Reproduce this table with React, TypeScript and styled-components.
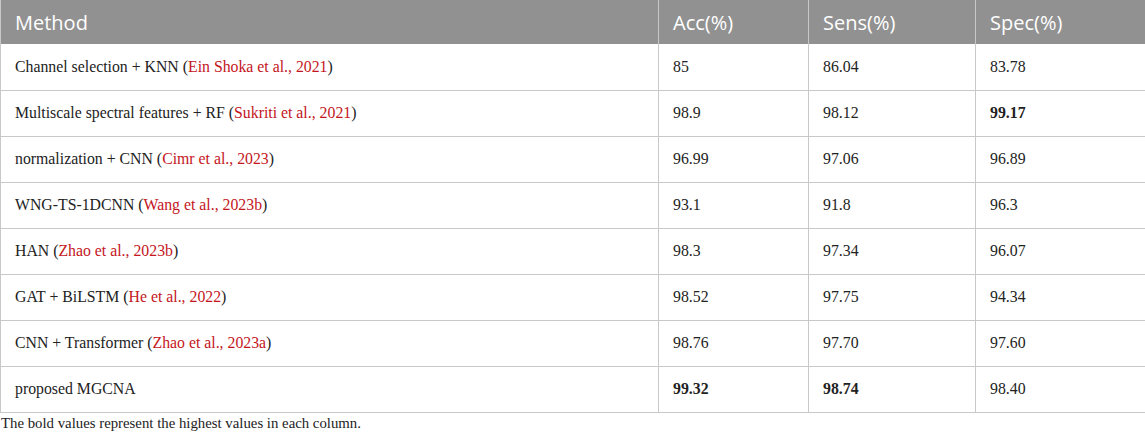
import React from "react";
import styled, { createGlobalStyle } from "styled-components";

const Global = createGlobalStyle`
  html, body { margin: 0; padding: 0; background: #ffffff; }
`;

const Wrap = styled.div`
  width: 1145px;
`;

const Table = styled.table`
  width: 1145px;
  border-collapse: collapse;
  table-layout: fixed;
  border-left: 1px solid #c8c8c8;
  border-right: 2px solid #c8c8c8;
`;

const HeadCell = styled.th`
  background: #919191;
  color: #ffffff;
  font-family: "Open Sans", "Noto Sans", sans-serif;
  font-weight: 400;
  font-size: 20px;
  text-align: left;
  height: 44px;
  padding: 0 0 0 14px;
  border-left: 1px solid #c8c8c8;
  box-sizing: border-box;
`;

const Cell = styled.td<{ $bold?: boolean }>`
  font-family: "Liberation Serif", "Times New Roman", serif;
  font-size: 15.8px;
  color: #222;
  font-weight: ${(p) => (p.$bold ? 700 : 400)};
  height: 46px;
  padding: 0 0 0 14px;
  border-left: 1px solid #c8c8c8;
  border-bottom: 1px solid #c8c8c8;
  box-sizing: border-box;
`;

const Cite = styled.span`
  color: #c4161c;
`;

const Note = styled.div`
  font-family: "Liberation Serif", "Times New Roman", serif;
  font-size: 14.8px;
  color: #222;
  padding: 2px 0 0 1px;
`;

type Row = {
  m: string;
  c: string;
  v: [string, string, string];
  b?: [boolean, boolean, boolean];
};

const rows: Row[] = [
  { m: "Channel selection + KNN", c: "Ein Shoka et al., 2021", v: ["85", "86.04", "83.78"] },
  { m: "Multiscale spectral features + RF", c: "Sukriti et al., 2021", v: ["98.9", "98.12", "99.17"], b: [false, false, true] },
  { m: "normalization + CNN", c: "Cimr et al., 2023", v: ["96.99", "97.06", "96.89"] },
  { m: "WNG-TS-1DCNN", c: "Wang et al., 2023b", v: ["93.1", "91.8", "96.3"] },
  { m: "HAN", c: "Zhao et al., 2023b", v: ["98.3", "97.34", "96.07"] },
  { m: "GAT + BiLSTM", c: "He et al., 2022", v: ["98.52", "97.75", "94.34"] },
  { m: "CNN + Transformer", c: "Zhao et al., 2023a", v: ["98.76", "97.70", "97.60"] },
  { m: "proposed MGCNA", c: "", v: ["99.32", "98.74", "98.40"], b: [true, true, false] },
];

export default function App() {
  return (
    <Wrap>
      <Global />
      <Table>
        <colgroup>
          <col style={{ width: 658 }} />
          <col style={{ width: 150 }} />
          <col style={{ width: 167 }} />
          <col style={{ width: 170 }} />
        </colgroup>
        <thead>
          <tr>
            <HeadCell>Method</HeadCell>
            <HeadCell>Acc(%)</HeadCell>
            <HeadCell>Sens(%)</HeadCell>
            <HeadCell>Spec(%)</HeadCell>
          </tr>
        </thead>
        <tbody>
          {rows.map((r) => (
            <tr key={r.m}>
              <Cell>
                {r.m}
                {r.c && (
                  <>
                    {" ("}
                    <Cite>{r.c}</Cite>
                    {")"}
                  </>
                )}
              </Cell>
              {r.v.map((v, i) => (
                <Cell key={i} $bold={r.b ? r.b[i] : false}>
                  {v}
                </Cell>
              ))}
            </tr>
          ))}
        </tbody>
      </Table>
      <Note>The bold values represent the highest values in each column.</Note>
    </Wrap>
  );
}
